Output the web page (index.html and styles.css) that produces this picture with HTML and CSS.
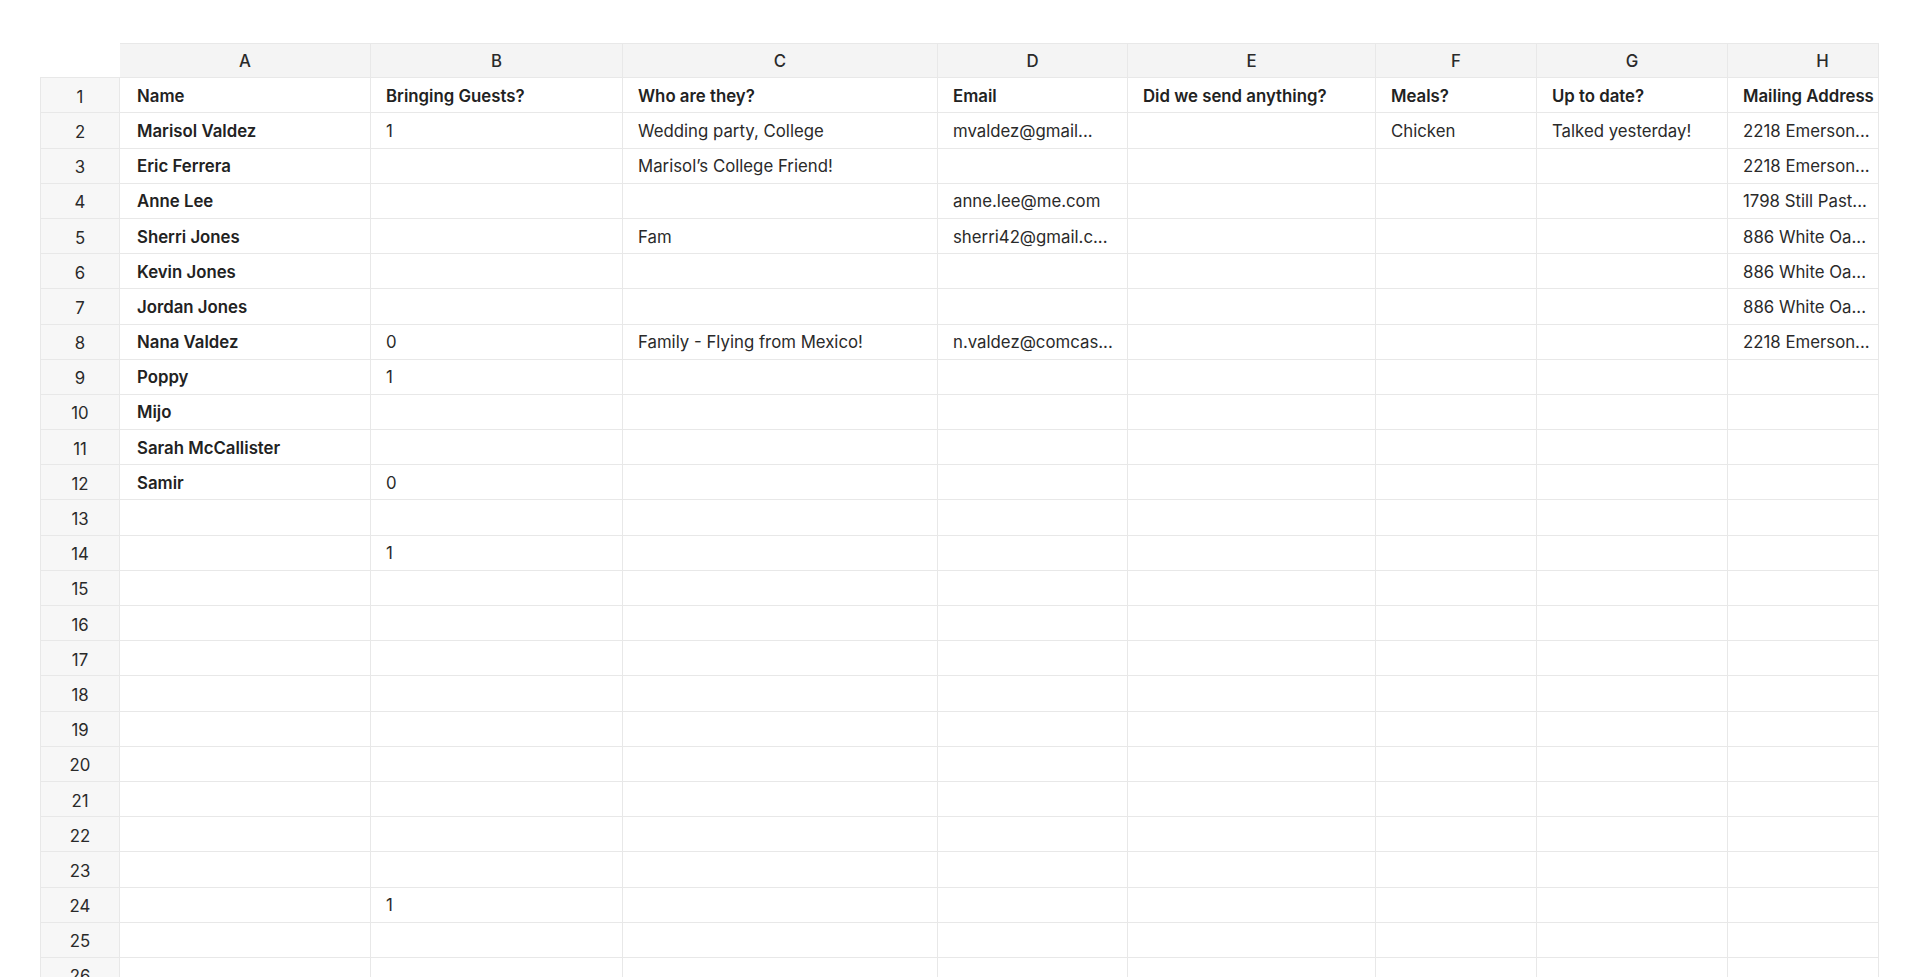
FILE: index.html
```html
<!DOCTYPE html>
<html lang="en">
<head>
<meta charset="utf-8">
<title>Guest List</title>
<link rel="stylesheet" href="styles.css">
</head>
<body>
<div class="frame">
<div class="sheet">
  <div class="corner"></div>
  <div class="colhead">A</div><div class="colhead">B</div><div class="colhead">C</div><div class="colhead">D</div><div class="colhead">E</div><div class="colhead">F</div><div class="colhead">G</div><div class="colhead">H</div>

  <div class="rownum">1</div><div class="cell first bold">Name</div><div class="cell bold">Bringing Guests?</div><div class="cell bold">Who are they?</div><div class="cell bold">Email</div><div class="cell bold">Did we send anything?</div><div class="cell bold">Meals?</div><div class="cell bold">Up to date?</div><div class="cell bold">Mailing Address</div>

  <div class="rownum">2</div><div class="cell first bold">Marisol Valdez</div><div class="cell">1</div><div class="cell">Wedding party, College</div><div class="cell">mvaldez@gmail...</div><div class="cell"></div><div class="cell">Chicken</div><div class="cell">Talked yesterday!</div><div class="cell">2218 Emerson...</div>

  <div class="rownum">3</div><div class="cell first bold">Eric Ferrera</div><div class="cell"></div><div class="cell">Marisol’s College Friend!</div><div class="cell"></div><div class="cell"></div><div class="cell"></div><div class="cell"></div><div class="cell">2218 Emerson...</div>

  <div class="rownum">4</div><div class="cell first bold">Anne Lee</div><div class="cell"></div><div class="cell"></div><div class="cell">anne.lee@me.com</div><div class="cell"></div><div class="cell"></div><div class="cell"></div><div class="cell">1798 Still Past...</div>

  <div class="rownum">5</div><div class="cell first bold">Sherri Jones</div><div class="cell"></div><div class="cell">Fam</div><div class="cell">sherri42@gmail.c...</div><div class="cell"></div><div class="cell"></div><div class="cell"></div><div class="cell">886 White Oa...</div>

  <div class="rownum">6</div><div class="cell first bold">Kevin Jones</div><div class="cell"></div><div class="cell"></div><div class="cell"></div><div class="cell"></div><div class="cell"></div><div class="cell"></div><div class="cell">886 White Oa...</div>

  <div class="rownum">7</div><div class="cell first bold">Jordan Jones</div><div class="cell"></div><div class="cell"></div><div class="cell"></div><div class="cell"></div><div class="cell"></div><div class="cell"></div><div class="cell">886 White Oa...</div>

  <div class="rownum">8</div><div class="cell first bold">Nana Valdez</div><div class="cell">0</div><div class="cell">Family - Flying from Mexico!</div><div class="cell">n.valdez@comcas...</div><div class="cell"></div><div class="cell"></div><div class="cell"></div><div class="cell">2218 Emerson...</div>

  <div class="rownum">9</div><div class="cell first bold">Poppy</div><div class="cell">1</div><div class="cell"></div><div class="cell"></div><div class="cell"></div><div class="cell"></div><div class="cell"></div><div class="cell"></div>

  <div class="rownum">10</div><div class="cell first bold">Mijo</div><div class="cell"></div><div class="cell"></div><div class="cell"></div><div class="cell"></div><div class="cell"></div><div class="cell"></div><div class="cell"></div>

  <div class="rownum">11</div><div class="cell first bold">Sarah McCallister</div><div class="cell"></div><div class="cell"></div><div class="cell"></div><div class="cell"></div><div class="cell"></div><div class="cell"></div><div class="cell"></div>

  <div class="rownum">12</div><div class="cell first bold">Samir</div><div class="cell">0</div><div class="cell"></div><div class="cell"></div><div class="cell"></div><div class="cell"></div><div class="cell"></div><div class="cell"></div>

  <div class="rownum">13</div><div class="cell first"></div><div class="cell"></div><div class="cell"></div><div class="cell"></div><div class="cell"></div><div class="cell"></div><div class="cell"></div><div class="cell"></div>

  <div class="rownum">14</div><div class="cell first"></div><div class="cell">1</div><div class="cell"></div><div class="cell"></div><div class="cell"></div><div class="cell"></div><div class="cell"></div><div class="cell"></div>

  <div class="rownum">15</div><div class="cell first"></div><div class="cell"></div><div class="cell"></div><div class="cell"></div><div class="cell"></div><div class="cell"></div><div class="cell"></div><div class="cell"></div>

  <div class="rownum">16</div><div class="cell first"></div><div class="cell"></div><div class="cell"></div><div class="cell"></div><div class="cell"></div><div class="cell"></div><div class="cell"></div><div class="cell"></div>

  <div class="rownum">17</div><div class="cell first"></div><div class="cell"></div><div class="cell"></div><div class="cell"></div><div class="cell"></div><div class="cell"></div><div class="cell"></div><div class="cell"></div>

  <div class="rownum">18</div><div class="cell first"></div><div class="cell"></div><div class="cell"></div><div class="cell"></div><div class="cell"></div><div class="cell"></div><div class="cell"></div><div class="cell"></div>

  <div class="rownum">19</div><div class="cell first"></div><div class="cell"></div><div class="cell"></div><div class="cell"></div><div class="cell"></div><div class="cell"></div><div class="cell"></div><div class="cell"></div>

  <div class="rownum">20</div><div class="cell first"></div><div class="cell"></div><div class="cell"></div><div class="cell"></div><div class="cell"></div><div class="cell"></div><div class="cell"></div><div class="cell"></div>

  <div class="rownum">21</div><div class="cell first"></div><div class="cell"></div><div class="cell"></div><div class="cell"></div><div class="cell"></div><div class="cell"></div><div class="cell"></div><div class="cell"></div>

  <div class="rownum">22</div><div class="cell first"></div><div class="cell"></div><div class="cell"></div><div class="cell"></div><div class="cell"></div><div class="cell"></div><div class="cell"></div><div class="cell"></div>

  <div class="rownum">23</div><div class="cell first"></div><div class="cell"></div><div class="cell"></div><div class="cell"></div><div class="cell"></div><div class="cell"></div><div class="cell"></div><div class="cell"></div>

  <div class="rownum">24</div><div class="cell first"></div><div class="cell">1</div><div class="cell"></div><div class="cell"></div><div class="cell"></div><div class="cell"></div><div class="cell"></div><div class="cell"></div>

  <div class="rownum">25</div><div class="cell first"></div><div class="cell"></div><div class="cell"></div><div class="cell"></div><div class="cell"></div><div class="cell"></div><div class="cell"></div><div class="cell"></div>

  <div class="rownum">26</div><div class="cell first"></div><div class="cell"></div><div class="cell"></div><div class="cell"></div><div class="cell"></div><div class="cell"></div><div class="cell"></div><div class="cell"></div>
</div>
</div>
</body>
</html>
```

FILE: styles.css
```css
html, body {
  margin: 0;
  padding: 0;
  background: #ffffff;
  height: 977px;
  overflow: hidden;
}

body {
  font-family: Inter, "Liberation Sans", sans-serif;
  font-size: 16.8px;
  color: #2a2a2a;
}

.frame {
  width: 1838px;
  margin: 43px 0 0 40px;
  overflow: hidden;
  border-right: 1px solid #e8e8e8;
}

.sheet {
  display: grid;
  grid-template-columns: 80px 251px 252px 315px 190px 248px 161px 191px 190px;
  grid-auto-rows: 35.2px;
  width: max-content;
}

.corner {
  background: #ffffff;
  border-bottom: 1px solid #e8e8e8;
}

.colhead {
  display: flex;
  align-items: center;
  justify-content: center;
  padding-top: 1px;
  background: #f4f4f4;
  border-top: 1px solid #e8e8e8;
  border-right: 1px solid #e8e8e8;
  border-bottom: 1px solid #e8e8e8;
  font-size: 16.8px;
  font-weight: 500;
  color: #2a2a2a;
}

.rownum {
  display: flex;
  align-items: center;
  justify-content: center;
  padding-top: 3px;
  background: #f7f7f7;
  border-left: 1px solid #e8e8e8;
  border-right: 1px solid #e8e8e8;
  border-bottom: 1px solid #e8e8e8;
  color: #2a2a2a;
}

.cell {
  display: flex;
  align-items: center;
  padding: 1px 14px 0 15px;
  border-right: 1px solid #e8e8e8;
  border-bottom: 1px solid #e8e8e8;
  white-space: nowrap;
  overflow: hidden;
}

.first {
  padding-left: 17px;
}

.bold {
  font-weight: 600;
  color: #222222;
}
```
